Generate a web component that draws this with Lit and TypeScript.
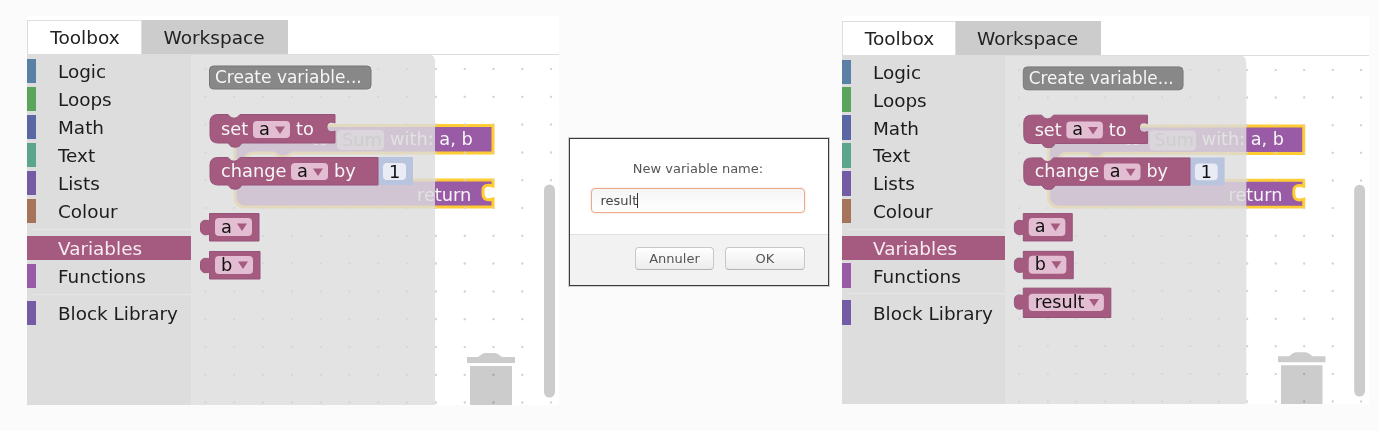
import { LitElement, html, css, svg } from "lit";
import { customElement, property } from "lit/decorators.js";

const VAR = "#a55b80";

const ROWS: Array<{ name?: string; color?: string; selected?: boolean; sep?: boolean }> = [
  { name: "Logic", color: "#5b80a5" },
  { name: "Loops", color: "#5ba55b" },
  { name: "Math", color: "#5b67a5" },
  { name: "Text", color: "#5ba58c" },
  { name: "Lists", color: "#745ba5" },
  { name: "Colour", color: "#a5745b" },
  { sep: true },
  { name: "Variables", color: VAR, selected: true },
  { name: "Functions", color: "#995ba5" },
  { sep: true },
  { name: "Block Library", color: "#745ba5" },
];

const dots = () => {
  const out = [];
  for (let r = 0; r < 13; r++) {
    for (let c = 0; c < 13; c++) {
      const x = 205.5 + 28.8 * c;
      const y = 69 + 27.8 * r;
      out.push(svg`<rect class="dot" x=${x - 1} y=${y - 1} width="2" height="2" rx="1"></rect>`);
    }
  }
  return out;
};

const label = (x: number, y: number, t: string) => svg`<text class="bt" x=${x} y=${y}>${t}</text>`;

const dropdown = (x: number, y: number, w: number, h: number, t: string) => svg`
  <rect class="field" x=${x} y=${y} width=${w} height=${h} rx="4"></rect>
  <text class="ft" x=${x + 6} y=${y + h - 3.5}>${t}</text>
  <path class="arrow" d="M${x + w - 15} ${y + 5.5}h10l-5 7.500z"></path>
`;

const stmtBlock = (right: number, top: number, bottom: number, socket: boolean) => {
  const hole = socket ? `V${top + 9}c-5 -2 -8 0 -8 3.500v1c0 3 3 5.500 8 3.500` : "";
  return svg`<path class="vb" d="M210 ${top + 8}Q210 ${top + 0.5} 218 ${top + 0.5}H228l3 3q3 1.500 6 0l3 -3H${right}${hole}V${bottom - 2}H242l-3 3.500q-4 1.500 -8 0l-3 -3.500H218Q210 ${bottom - 2} 210 ${bottom - 10}Z"></path>`;
};

const varBlock = (right: number, top: number, bottom: number) =>
  svg`<path class="vb" d="M209.500 ${top + 0.5}H${right}V${bottom}H209.500V${top + 21}c-4 1.500 -9 1 -9 -5v-3.500c0 -5.500 5 -6 9 -4.500Z"></path>`;

const workspace = () => svg`
  ${dots()}
  <circle class="mut" cx="256" cy="139" r="9"></circle>
  <circle class="mut" cx="287" cy="139" r="9"></circle>
  <path class="fn" d="M245 125.500H493V153H292l-4 3q-5 2 -10 0l-4 -3H254q-8 0 -8 7V172q0 8 8 8H493V186c-6 -2 -10 0 -10 4v4c0 5 4 7 10 5V207H246Q235 207 235 196V136Q235 125.500 245 125.500Z"></path>
  <rect class="sum" x="337" y="130" width="47" height="20" rx="4"></rect>
  ${label(311, 145, "to")}
  <text class="sumt" x="342" y="145.500">Sum</text>
  ${label(390, 145, "with: a, b")}
  ${label(417, 200.5, "return")}
  <path class="flyout" d="M191 54H427q8 0 8 8V405H191Z"></path>
  <g class="flydots">${dots()}</g>
  <rect class="btn" x="209.500" y="66" width="161.500" height="23" rx="4"></rect>
  <text class="bt small" x="215" y="83">Create variable...</text>

  <path class="value" d="M378 157H413V185H378V176c-5 2 -10 0 -10 -4v-5c0 -4 5 -6 10 -4Z"></path>
  <rect class="num" x="383" y="163" width="23" height="17" rx="4"></rect>
  <text class="ft" x="389" y="177.500">1</text>

  ${stmtBlock(335, 114, 145, true)}
  ${label(221, 135, "set")}
  ${dropdown(253, 121, 37, 17, "a")}
  ${label(296, 135, "to")}

  ${stmtBlock(378, 157, 187, false)}
  ${label(221, 177, "change")}
  ${dropdown(291, 163, 37, 17, "a")}
  ${label(334, 177, "by")}

  ${varBlock(259, 213, 241)}
  ${dropdown(215, 218, 37, 18, "a")}
  ${varBlock(260, 251, 279)}
  ${dropdown(215, 256, 38, 18, "b")}

  <path class="scroll" d="M544 190a5.500 5.500 0 0 1 11 0V392a5.500 5.500 0 0 1 -11 0Z"></path>
  <g class="trash">
    <path d="M467 357h11l4 -3q2 -1 4 -1h8q2 0 4 1l4 3h13v6h-48Z"></path>
    <rect x="470" y="366" width="42" height="39"></rect>
  </g>
`;

@customElement("block-panel")
class BlockPanel extends LitElement {
  @property({ type: Boolean, reflect: true }) wide = false;
  @property({ type: Boolean }) result = false;

  static styles = css`
    :host {
      display: flex;
      flex-direction: column;
      box-sizing: border-box;
      width: 527px;
      height: 388px;
      padding-top: 5px;
      background: #fff;
      font-family: "DejaVu Sans", sans-serif;
      --tab-a: 114px;
      --tab-b: 145px;
      --tool: 163px;
      --pitch: 27.85px;
    }
    :host([wide]) {
      width: 532px;
      height: 389px;
      padding-top: 4px;
      --tab-a: 115px;
      --tab-b: 146px;
      --tool: 164px;
      --pitch: 28px;
    }
    .tabs {
      display: flex;
      height: 34px;
      flex: none;
      border-bottom: 1px solid #ddd;
      margin-bottom: -1px;
    }
    .tab {
      display: flex;
      align-items: center;
      justify-content: center;
      font-size: 18.5px;
      color: #222;
      box-sizing: border-box;
    }
    .tab.a {
      width: var(--tab-a);
      background: #fff;
      border: 1px solid #ddd;
      border-bottom: none;
      padding-left: 1px;
    }
    .tab.b {
      width: var(--tab-b);
      background: #ccc;
      padding-right: 2px;
    }
    .body {
      flex: 1;
      display: flex;
      min-height: 0;
    }
    .toolbox {
      flex: none;
      width: var(--tool);
      background: #ddd;
      padding-top: 4.5px;
      box-sizing: border-box;
      overflow: hidden;
    }
    .row {
      height: var(--pitch);
    }
    .item {
      display: flex;
      align-items: center;
      height: 24.7px;
      font-size: 18.4px;
      color: #1c1c1c;
    }
    .item.sel {
      background: var(--c);
      color: #f6ecf1;
    }
    .stripe {
      width: 9px;
      height: 100%;
      background: var(--c);
      flex: none;
    }
    .name {
      margin-left: 22px;
      padding-top: 1px;
      white-space: nowrap;
    }
    .sep {
      height: 1px;
      background: #e6e6e6;
      margin: 2px 0 6px 6px;
    }
    .canvas {
      flex: 1;
      min-width: 0;
      height: 100%;
      display: block;
    }
    text {
      font-family: "DejaVu Sans", sans-serif;
      font-size: 17.8px;
    }
    .small { font-size: 17px; fill: #eee; }
    .dot { fill: #bbb; }
    .flydots .dot { fill: #d6d6d6; }
    .mut { fill: #5f72d8; }
    .fn { fill: #995ba5; stroke: #fc3; stroke-width: 3; }
    .sum { fill: #fff; fill-opacity: .55; }
    .sumt { fill: #888; }
    .bt { fill: #f6f6f6; }
    .flyout { fill: #ddd; fill-opacity: .82; }
    .btn { fill: #888; stroke: #777; stroke-width: 1; }
    .vb { fill: #a55b80; stroke: #96527a; stroke-width: 1; }
    .field { fill: #e3bdd1; }
    .ft { fill: #111; }
    .arrow { fill: #a55b80; }
    .value { fill: #b9c4de; }
    .num { fill: #e9ecf5; }
    .scroll { fill: #ccc; }
    .trash { fill: #000; fill-opacity: .2; }
  `;

  render() {
    return html`
      <div class="tabs">
        <div class="tab a">Toolbox</div>
        <div class="tab b">Workspace</div>
      </div>
      <div class="body">
        <div class="toolbox">
          ${ROWS.map((r) =>
            r.sep
              ? html`<div class="sep"></div>`
              : html`<div class="row" style="--c:${r.color}">
                  <div class="item ${r.selected ? "sel" : ""}">
                    <div class="stripe"></div>
                    <div class="name">${r.name}</div>
                  </div>
                </div>`
          )}
        </div>
        <svg class="canvas" viewBox="191 54 368 351" preserveAspectRatio="none">
          ${workspace()}
          ${this.result
            ? svg`${varBlock(298, 288, 318)}${dropdown(215, 294, 76, 17.5, "result")}`
            : null}
        </svg>
      </div>
    `;
  }
}

@customElement("name-dialog")
class NameDialog extends LitElement {
  static styles = css`
    :host {
      display: flex;
      flex-direction: column;
      box-sizing: border-box;
      width: 260px;
      height: 148px;
      border: 1.5px solid #3a3a3a;
      box-shadow: 0 0 0 1px #d0d0d0;
      background: #fff;
      font-family: "DejaVu Sans", sans-serif;
      color: #555;
      font-size: 13px;
    }
    .top {
      height: 95px;
      flex: none;
      box-sizing: border-box;
      padding: 22px 23px 0 21px;
      display: flex;
      flex-direction: column;
      align-items: center;
      gap: 11px;
    }
    .msg {
      line-height: 16px;
    }
    .input {
      align-self: stretch;
      height: 25px;
      box-sizing: border-box;
      border: 1.5px solid #eaa88f;
      border-radius: 4px;
      box-shadow: 0 0 2px #f4cfc1;
      background: linear-gradient(#f5f5f5, #fff);
      padding-left: 8.5px;
      display: flex;
      align-items: center;
      color: #444;
    }
    .caret {
      width: 1px;
      height: 15px;
      background: #333;
    }
    .foot {
      flex: 1;
      background: #f2f2f2;
      border-top: 1px solid #e0e0e0;
      display: flex;
      justify-content: flex-end;
      align-items: flex-start;
      gap: 11px;
      padding: 12px 23px 0 0;
    }
    .b {
      height: 23px;
      box-sizing: border-box;
      border: 1px solid #c8c8c8;
      border-bottom-color: #b4b4b4;
      border-radius: 4px;
      background: linear-gradient(#fff, #ececec);
      display: flex;
      align-items: center;
      justify-content: center;
    }
    .b.c { width: 79px; }
    .b.o { width: 80px; }
  `;
  render() {
    return html`
      <div class="top">
        <div class="msg">New variable name:</div>
        <div class="input">result<span class="caret"></span></div>
      </div>
      <div class="foot">
        <div class="b c">Annuler</div>
        <div class="b o">OK</div>
      </div>
    `;
  }
}

@customElement("app-root")
class AppRoot extends LitElement {
  static styles = css`
    :host {
      display: block;
      height: 431px;
      overflow: hidden;
      background: #fbfbfb;
      filter: blur(0.4px);
    }
    .page {
      display: flex;
      align-items: flex-start;
      padding: 16px 0 0 27px;
    }
    name-dialog {
      margin: 122px 13px 0 10px;
    }
  `;
  render() {
    return html`
      <div class="page">
        <block-panel wide></block-panel>
        <name-dialog></name-dialog>
        <block-panel result></block-panel>
      </div>
    `;
  }
}
